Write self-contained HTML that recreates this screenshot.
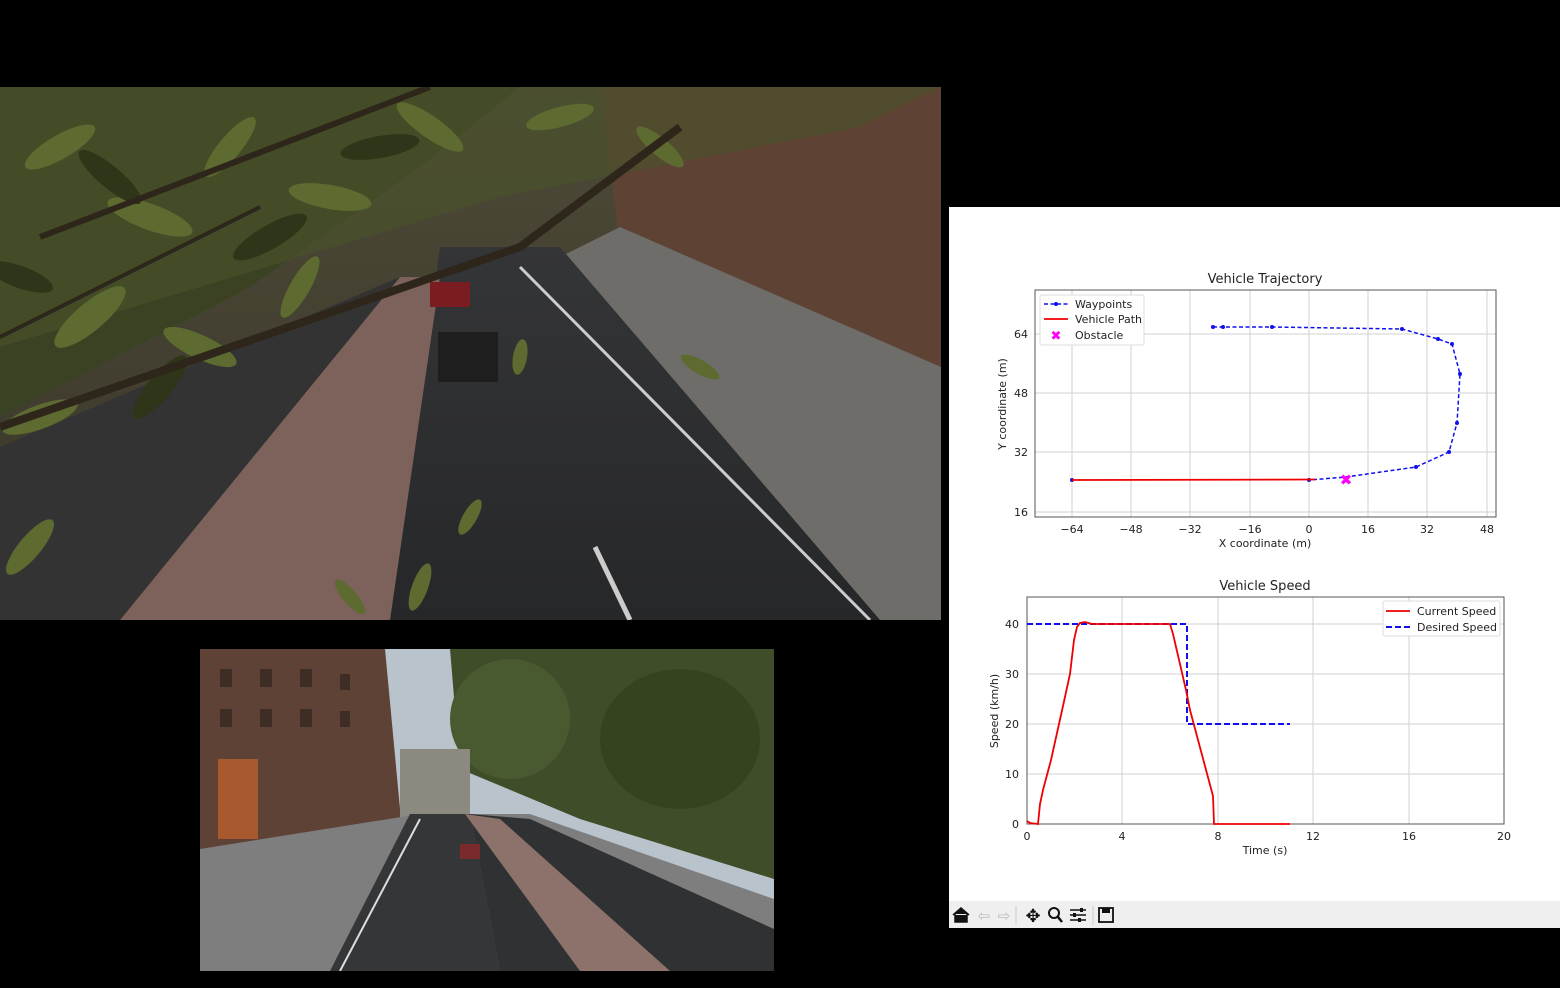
<!DOCTYPE html>
<html><head><meta charset="utf-8"><style>
html,body{margin:0;padding:0;background:#000;width:1560px;height:988px;overflow:hidden;font-family:"DejaVu Sans","Liberation Sans",sans-serif}
.abs{position:absolute}
</style></head><body>
<svg class="abs" style="left:0;top:87px" width="941" height="533" viewBox="0 0 941 533">
<defs>
<linearGradient id="sky" x1="0" y1="0" x2="0" y2="1"><stop offset="0" stop-color="#4e4a38"/><stop offset="1" stop-color="#38362a"/></linearGradient>
<linearGradient id="road" x1="0" y1="0" x2="0" y2="1"><stop offset="0" stop-color="#343537"/><stop offset="1" stop-color="#262729"/></linearGradient>
</defs>
<rect width="941" height="533" fill="url(#sky)"/>
<polygon points="600,0 941,0 941,300 740,220 620,160" fill="#5e4234"/>
<polygon points="620,140 941,280 941,533 860,533 560,170" fill="#6e6d69"/>
<polygon points="440,160 560,160 880,533 390,533" fill="url(#road)"/>
<polygon points="400,190 440,190 390,533 120,533" fill="#7c625b"/>
<polygon points="0,360 400,190 120,533 0,533" fill="#333"/>
<line x1="520" y1="180" x2="870" y2="533" stroke="#ccc" stroke-width="3"/>
<line x1="595" y1="460" x2="630" y2="533" stroke="#ccc" stroke-width="5"/>
<rect x="430" y="195" width="40" height="25" fill="#7a1c20"/>
<rect x="438" y="245" width="60" height="50" fill="#1e1e1e"/>
<polygon points="0,0 520,0 420,80 250,200 0,330" fill="#3a4322" opacity="0.9"/>
<polygon points="0,0 940,0 860,40 500,110 0,260" fill="#4a5429" opacity="0.6"/>
<g fill="#5d6a30">
<ellipse cx="60" cy="60" rx="40" ry="12" transform="rotate(-30 60 60)"/>
<ellipse cx="150" cy="130" rx="45" ry="13" transform="rotate(20 150 130)"/>
<ellipse cx="230" cy="60" rx="38" ry="11" transform="rotate(-50 230 60)"/>
<ellipse cx="330" cy="110" rx="42" ry="12" transform="rotate(10 330 110)"/>
<ellipse cx="430" cy="40" rx="40" ry="11" transform="rotate(35 430 40)"/>
<ellipse cx="90" cy="230" rx="45" ry="14" transform="rotate(-40 90 230)"/>
<ellipse cx="200" cy="260" rx="40" ry="12" transform="rotate(25 200 260)"/>
<ellipse cx="40" cy="330" rx="40" ry="12" transform="rotate(-20 40 330)"/>
<ellipse cx="300" cy="200" rx="35" ry="10" transform="rotate(-60 300 200)"/>
<ellipse cx="560" cy="30" rx="35" ry="10" transform="rotate(-15 560 30)"/>
<ellipse cx="660" cy="60" rx="30" ry="9" transform="rotate(40 660 60)"/>
<ellipse cx="30" cy="460" rx="35" ry="11" transform="rotate(-50 30 460)"/>
<ellipse cx="470" cy="430" rx="20" ry="7" transform="rotate(-60 470 430)"/>
<ellipse cx="420" cy="500" rx="25" ry="8" transform="rotate(-70 420 500)"/>
<ellipse cx="350" cy="510" rx="22" ry="7" transform="rotate(50 350 510)"/>
<ellipse cx="520" cy="270" rx="18" ry="7" transform="rotate(-80 520 270)"/>
<ellipse cx="700" cy="280" rx="22" ry="7" transform="rotate(30 700 280)"/>
</g>
<g fill="#2e3519">
<ellipse cx="110" cy="90" rx="40" ry="11" transform="rotate(40 110 90)"/>
<ellipse cx="270" cy="150" rx="42" ry="12" transform="rotate(-30 270 150)"/>
<ellipse cx="160" cy="300" rx="40" ry="12" transform="rotate(-50 160 300)"/>
<ellipse cx="380" cy="60" rx="40" ry="11" transform="rotate(-10 380 60)"/>
<ellipse cx="20" cy="190" rx="35" ry="11" transform="rotate(20 20 190)"/>
</g>
<path d="M0,340 L520,160 L680,40" stroke="#2f261b" stroke-width="8" fill="none"/>
<path d="M40,150 L430,0" stroke="#2f261b" stroke-width="6" fill="none"/>
<path d="M0,250 L260,120" stroke="#2f261b" stroke-width="4" fill="none"/>
</svg>
<svg class="abs" style="left:200px;top:649px" width="574" height="322" viewBox="0 0 574 322">
<rect width="574" height="322" fill="#b9c3cc"/>
<polygon points="0,0 185,0 200,160 200,200 0,240" fill="#5e4236"/>
<g fill="#3e2d25"><rect x="20" y="20" width="12" height="18"/><rect x="60" y="20" width="12" height="18"/><rect x="100" y="20" width="12" height="18"/><rect x="140" y="25" width="10" height="16"/><rect x="20" y="60" width="12" height="18"/><rect x="60" y="60" width="12" height="18"/><rect x="100" y="60" width="12" height="18"/><rect x="140" y="62" width="10" height="16"/></g>
<polygon points="250,0 574,0 574,230 380,170 260,120" fill="#3f4d29"/>
<ellipse cx="310" cy="70" rx="60" ry="60" fill="#4a5a30"/>
<ellipse cx="480" cy="90" rx="80" ry="70" fill="#36431f"/>
<rect x="200" y="100" width="70" height="70" fill="#8c8a80"/>
<polygon points="0,200 220,165 330,165 574,250 574,322 0,322" fill="#7e7e7e"/>
<polygon points="210,165 270,165 300,322 130,322" fill="#353638"/>
<polygon points="270,165 330,170 574,280 574,322 300,322" fill="#303133"/>
<polygon points="265,165 300,170 470,322 380,322" fill="#8c726a"/>
<line x1="220" y1="170" x2="140" y2="322" stroke="#ddd" stroke-width="2"/>
<rect x="18" y="110" width="40" height="80" fill="#a85a2e"/>
<rect x="260" y="195" width="20" height="15" fill="#7a2a2a"/>
<rect x="0" y="175" width="574" height="0" fill="none"/>
</svg>
<div class="abs" style="left:949px;top:207px;width:611px;height:721px;background:#fff"></div>
<div class="abs" style="left:949px;top:901px;width:611px;height:27px;background:#efefef"></div>
<svg class="abs" style="left:0;top:0" width="1560" height="988" viewBox="0 0 1560 988" font-family="DejaVu Sans, Liberation Sans, sans-serif">
<g font-size="11" fill="#222">
<text x="1265" y="283" text-anchor="middle" font-size="13">Vehicle Trajectory</text>
<g stroke="#d0d0d0" stroke-width="1">
<line x1="1072" y1="290" x2="1072" y2="517"/><line x1="1131" y1="290" x2="1131" y2="517"/><line x1="1190" y1="290" x2="1190" y2="517"/><line x1="1250" y1="290" x2="1250" y2="517"/><line x1="1309" y1="290" x2="1309" y2="517"/><line x1="1368" y1="290" x2="1368" y2="517"/><line x1="1427" y1="290" x2="1427" y2="517"/><line x1="1487" y1="290" x2="1487" y2="517"/>
<line x1="1035" y1="334" x2="1496" y2="334"/><line x1="1035" y1="393" x2="1496" y2="393"/><line x1="1035" y1="452" x2="1496" y2="452"/><line x1="1035" y1="512" x2="1496" y2="512"/>
</g>
<rect x="1035" y="290" width="461" height="227" fill="none" stroke="#555" stroke-width="1"/>
<polyline points="1213,327 1223,327 1272,327 1402,329 1438,339 1452,344 1460,374 1457,423 1449,452 1416,467 1346,477 1309,480" fill="none" stroke="#1010ee" stroke-width="1.5" stroke-dasharray="4,2.5"/>
<g fill="#1010ee"><circle cx="1213" cy="327" r="2"/><circle cx="1223" cy="327" r="2"/><circle cx="1272" cy="327" r="2"/><circle cx="1402" cy="329" r="2"/><circle cx="1438" cy="339" r="2"/><circle cx="1452" cy="344" r="2"/><circle cx="1460" cy="374" r="2"/><circle cx="1457" cy="423" r="2"/><circle cx="1449" cy="452" r="2"/><circle cx="1416" cy="467" r="2"/><circle cx="1309" cy="480" r="2"/><circle cx="1072" cy="480" r="2"/></g>
<line x1="1072" y1="480" x2="1315" y2="479.5" stroke="#e00" stroke-width="1.8"/>
<text x="1346" y="485" text-anchor="middle" fill="#f0f" font-size="15" font-weight="bold">✖</text>
<g text-anchor="middle"><text x="1072" y="533">−64</text><text x="1131" y="533">−48</text><text x="1190" y="533">−32</text><text x="1250" y="533">−16</text><text x="1309" y="533">0</text><text x="1368" y="533">16</text><text x="1427" y="533">32</text><text x="1487" y="533">48</text></g>
<g text-anchor="end"><text x="1028" y="338">64</text><text x="1028" y="397">48</text><text x="1028" y="456">32</text><text x="1028" y="516">16</text></g>
<text x="1265" y="547" text-anchor="middle">X coordinate (m)</text>
<text transform="translate(1006,404) rotate(-90)" text-anchor="middle">Y coordinate (m)</text>
<rect x="1040" y="295" width="104" height="50" fill="#fff" stroke="#ddd" rx="2"/>
<line x1="1044" y1="304" x2="1068" y2="304" stroke="#1010ee" stroke-width="1.5" stroke-dasharray="4,2.5"/><circle cx="1056" cy="304" r="2" fill="#1010ee"/>
<line x1="1044" y1="319" x2="1068" y2="319" stroke="#e00" stroke-width="1.8"/>
<text x="1056" y="340" text-anchor="middle" fill="#f0f" font-size="13" font-weight="bold">✖</text>
<text x="1075" y="308">Waypoints</text><text x="1075" y="323">Vehicle Path</text><text x="1075" y="339">Obstacle</text>
<text x="1265" y="590" text-anchor="middle" font-size="13">Vehicle Speed</text>
<g stroke="#d0d0d0" stroke-width="1">
<line x1="1122" y1="597" x2="1122" y2="824"/><line x1="1218" y1="597" x2="1218" y2="824"/><line x1="1313" y1="597" x2="1313" y2="824"/><line x1="1409" y1="597" x2="1409" y2="824"/>
<line x1="1027" y1="624" x2="1504" y2="624"/><line x1="1027" y1="674" x2="1504" y2="674"/><line x1="1027" y1="724" x2="1504" y2="724"/><line x1="1027" y1="774" x2="1504" y2="774"/>
</g>
<rect x="1027" y="597" width="477" height="227" fill="none" stroke="#555" stroke-width="1"/>
<polyline points="1027,624 1187,624 1187,724 1290,724" fill="none" stroke="#1010ee" stroke-width="2" stroke-dasharray="6,3"/>
<polyline points="1027,821 1030,823 1038,824 1040,804 1043,790 1051,760 1063,706 1070,674 1074,640 1077,627 1080,623 1085,622 1092,624 1170,624 1173,634 1186,690 1190,710 1213,796 1214,824 1290,824" fill="none" stroke="#e00" stroke-width="1.8"/>
<g text-anchor="middle"><text x="1027" y="840">0</text><text x="1122" y="840">4</text><text x="1218" y="840">8</text><text x="1313" y="840">12</text><text x="1409" y="840">16</text><text x="1504" y="840">20</text></g>
<g text-anchor="end"><text x="1019" y="628">40</text><text x="1019" y="678">30</text><text x="1019" y="728">20</text><text x="1019" y="778">10</text><text x="1019" y="828">0</text></g>
<text x="1265" y="854" text-anchor="middle">Time (s)</text>
<text transform="translate(998,711) rotate(-90)" text-anchor="middle">Speed (km/h)</text>
<rect x="1383" y="601" width="117" height="35" fill="#fff" stroke="#ddd" rx="2"/>
<line x1="1386" y1="611" x2="1410" y2="611" stroke="#e00" stroke-width="1.8"/>
<line x1="1386" y1="627" x2="1410" y2="627" stroke="#1010ee" stroke-width="2" stroke-dasharray="6,3"/>
<text x="1417" y="615">Current Speed</text><text x="1417" y="631">Desired Speed</text>
</g>
<g>
<path d="M953,915 L961,908 L969,915 M955,914 V922 H967 V914" fill="#111" stroke="#111" stroke-width="1.5"/>
<text x="984" y="921" text-anchor="middle" font-size="15" fill="#bbb">⇦</text>
<text x="1004" y="921" text-anchor="middle" font-size="15" fill="#bbb">⇨</text>
<line x1="1016" y1="906" x2="1016" y2="925" stroke="#ccc"/>
<text x="1033" y="922" text-anchor="middle" font-size="18" fill="#111">✥</text>
<circle cx="1054" cy="913" r="5" fill="none" stroke="#111" stroke-width="2"/><line x1="1058" y1="917" x2="1062" y2="922" stroke="#111" stroke-width="2.5"/>
<g stroke="#111" stroke-width="1.5"><line x1="1070" y1="910" x2="1086" y2="910"/><line x1="1070" y1="915" x2="1086" y2="915"/><line x1="1070" y1="920" x2="1086" y2="920"/></g>
<g fill="#111"><rect x="1080" y="908" width="3" height="4"/><rect x="1073" y="913" width="3" height="4"/><rect x="1078" y="918" width="3" height="4"/></g>
<line x1="1093" y1="906" x2="1093" y2="925" stroke="#ccc"/>
<rect x="1099" y="908" width="14" height="14" fill="none" stroke="#111" stroke-width="1.8"/><rect x="1102" y="908" width="8" height="5" fill="#111"/>
</g>
</svg>
</body></html>
